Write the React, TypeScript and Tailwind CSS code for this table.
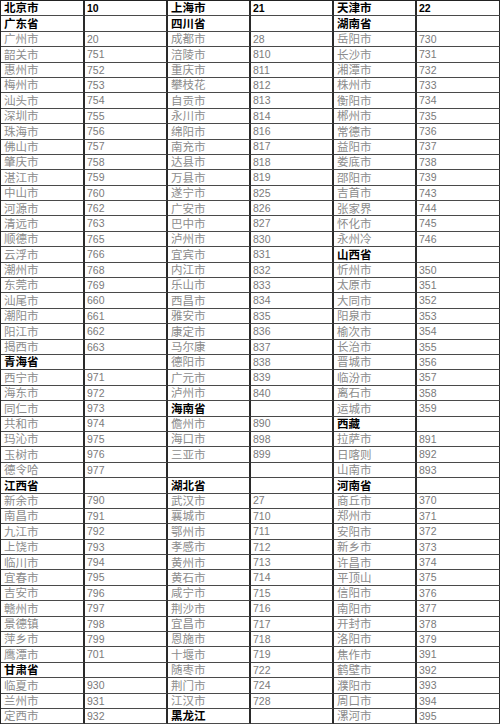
import React from 'react';

type Cell = [string, string, boolean?];

// 三组：名称 / 区号，true 表示加粗标题行
const groupA: Cell[] = [
  ['北京市', '10', true],
  ['广东省', '', true],
  ['广州市', '20'],
  ['韶关市', '751'],
  ['惠州市', '752'],
  ['梅州市', '753'],
  ['汕头市', '754'],
  ['深圳市', '755'],
  ['珠海市', '756'],
  ['佛山市', '757'],
  ['肇庆市', '758'],
  ['湛江市', '759'],
  ['中山市', '760'],
  ['河源市', '762'],
  ['清远市', '763'],
  ['顺德市', '765'],
  ['云浮市', '766'],
  ['潮州市', '768'],
  ['东莞市', '769'],
  ['汕尾市', '660'],
  ['潮阳市', '661'],
  ['阳江市', '662'],
  ['揭西市', '663'],
  ['青海省', '', true],
  ['西宁市', '971'],
  ['海东市', '972'],
  ['同仁市', '973'],
  ['共和市', '974'],
  ['玛沁市', '975'],
  ['玉树市', '976'],
  ['德令哈', '977'],
  ['江西省', '', true],
  ['新余市', '790'],
  ['南昌市', '791'],
  ['九江市', '792'],
  ['上饶市', '793'],
  ['临川市', '794'],
  ['宜春市', '795'],
  ['吉安市', '796'],
  ['赣州市', '797'],
  ['景德镇', '798'],
  ['萍乡市', '799'],
  ['鹰潭市', '701'],
  ['甘肃省', '', true],
  ['临夏市', '930'],
  ['兰州市', '931'],
  ['定西市', '932'],
];

const groupB: Cell[] = [
  ['上海市', '21', true],
  ['四川省', '', true],
  ['成都市', '28'],
  ['涪陵市', '810'],
  ['重庆市', '811'],
  ['攀枝花', '812'],
  ['自贡市', '813'],
  ['永川市', '814'],
  ['绵阳市', '816'],
  ['南充市', '817'],
  ['达县市', '818'],
  ['万县市', '819'],
  ['遂宁市', '825'],
  ['广安市', '826'],
  ['巴中市', '827'],
  ['泸州市', '830'],
  ['宜宾市', '831'],
  ['内江市', '832'],
  ['乐山市', '833'],
  ['西昌市', '834'],
  ['雅安市', '835'],
  ['康定市', '836'],
  ['马尔康', '837'],
  ['德阳市', '838'],
  ['广元市', '839'],
  ['泸州市', '840'],
  ['海南省', '', true],
  ['儋州市', '890'],
  ['海口市', '898'],
  ['三亚市', '899'],
  ['', ''],
  ['湖北省', '', true],
  ['武汉市', '27'],
  ['襄城市', '710'],
  ['鄂州市', '711'],
  ['孝感市', '712'],
  ['黄州市', '713'],
  ['黄石市', '714'],
  ['咸宁市', '715'],
  ['荆沙市', '716'],
  ['宜昌市', '717'],
  ['恩施市', '718'],
  ['十堰市', '719'],
  ['随枣市', '722'],
  ['荆门市', '724'],
  ['江汉市', '728'],
  ['黑龙江', '', true],
];

const groupC: Cell[] = [
  ['天津市', '22', true],
  ['湖南省', '', true],
  ['岳阳市', '730'],
  ['长沙市', '731'],
  ['湘潭市', '732'],
  ['株州市', '733'],
  ['衡阳市', '734'],
  ['郴州市', '735'],
  ['常德市', '736'],
  ['益阳市', '737'],
  ['娄底市', '738'],
  ['邵阳市', '739'],
  ['吉首市', '743'],
  ['张家界', '744'],
  ['怀化市', '745'],
  ['永州冷', '746'],
  ['山西省', '', true],
  ['忻州市', '350'],
  ['太原市', '351'],
  ['大同市', '352'],
  ['阳泉市', '353'],
  ['榆次市', '354'],
  ['长治市', '355'],
  ['晋城市', '356'],
  ['临汾市', '357'],
  ['离石市', '358'],
  ['运城市', '359'],
  ['西藏', '', true],
  ['拉萨市', '891'],
  ['日喀则', '892'],
  ['山南市', '893'],
  ['河南省', '', true],
  ['商丘市', '370'],
  ['郑州市', '371'],
  ['安阳市', '372'],
  ['新乡市', '373'],
  ['许昌市', '374'],
  ['平顶山', '375'],
  ['信阳市', '376'],
  ['南阳市', '377'],
  ['开封市', '378'],
  ['洛阳市', '379'],
  ['焦作市', '391'],
  ['鹤壁市', '392'],
  ['濮阳市', '393'],
  ['周口市', '394'],
  ['漯河市', '395'],
];

function NameCell({ text, bold }: { text: string; bold?: boolean }) {
  return (
    <div
      className={
        bold
          ? "h-[15.4px] flex items-center border-b border-b-[#4a4a4a] border-r-2 border-r-[#2a2a2a] pl-[3px] text-[11.5px] leading-none font-bold text-black font-['Noto_Sans_CJK_SC',sans-serif] whitespace-nowrap"
          : "h-[15.4px] flex items-center border-b border-b-[#4a4a4a] border-r-2 border-r-[#2a2a2a] pl-[3px] text-[11.5px] leading-none text-[#8c8c8c] font-['Noto_Sans_CJK_SC',sans-serif] whitespace-nowrap"
      }
    >
      {text}
    </div>
  );
}

function CodeCell({ text, head }: { text: string; head?: boolean }) {
  return (
    <div
      className={
        head
          ? "h-[15.4px] flex items-center border-b border-b-[#4a4a4a] border-r-2 border-r-[#2a2a2a] pl-[2px] text-[10.5px] leading-none font-bold text-black font-['Liberation_Sans',Arial,sans-serif]"
          : "h-[15.4px] flex items-center border-b border-b-[#4a4a4a] border-r-2 border-r-[#2a2a2a] pl-[2px] text-[10.5px] leading-none text-[#7a7a7a] font-['Liberation_Sans',Arial,sans-serif]"
      }
    >
      {text}
    </div>
  );
}

export default function App() {
  const rows = groupA.map((a, i) => [a, groupB[i], groupC[i]]);

  return (
    <div className="w-[500px] h-[728px] bg-white overflow-hidden">
      <div className="grid grid-cols-[84px_83px_83px_83px_83px_84px] border-t border-l border-[#222]">
        {rows.map((row, i) =>
          row.map(([name, code, bold], j) => (
            <React.Fragment key={`${i}-${j}`}>
              <NameCell text={name} bold={bold} />
              <CodeCell text={code} head={i === 0} />
            </React.Fragment>
          ))
        )}
      </div>
    </div>
  );
}
